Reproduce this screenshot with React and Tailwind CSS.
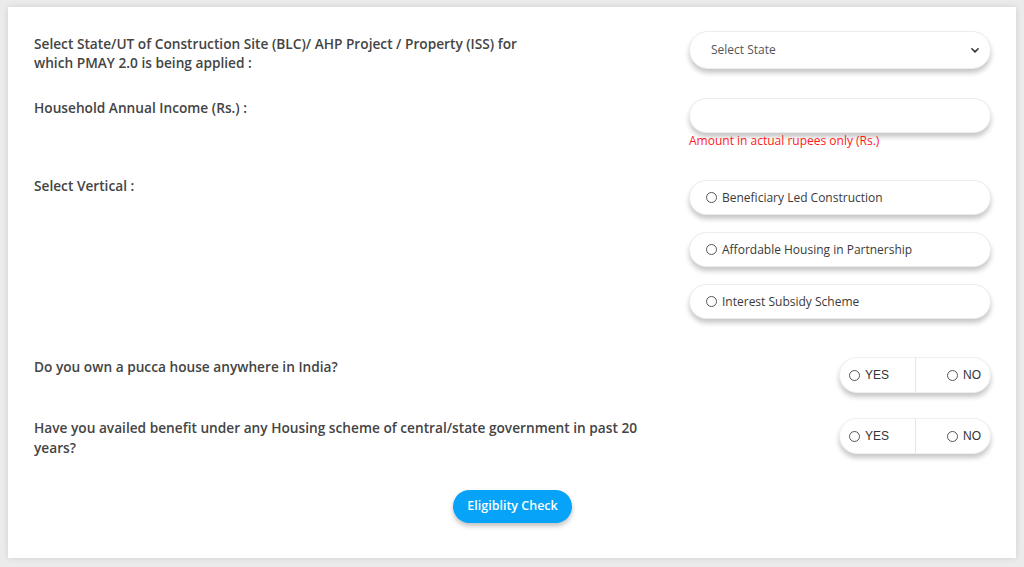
import React, { useState } from 'react';

const font = { fontFamily: '"Open Sans", "Liberation Sans", sans-serif' };

function Radio({ checked }) {
  return (
    <span className="inline-block w-[11px] h-[11px] rounded-full border border-[#555] bg-white shrink-0">
      {checked && <span className="block w-[5px] h-[5px] m-[2px] rounded-full bg-[#333]" />}
    </span>
  );
}

function Pill({ children, className = '' }) {
  return (
    <div className={`w-[302px] rounded-full bg-white border border-[#ececec] shadow-[0_4px_5px_rgba(0,0,0,0.22)] ${className}`}>
      {children}
    </div>
  );
}

function YesNo({ value, onChange }) {
  return (
    <div className="w-[152px] h-[36px] rounded-full bg-white border border-[#efefef] shadow-[0_4px_5px_rgba(0,0,0,0.22)] flex text-[12px] text-[#333]" style={{ fontFamily: '"Liberation Sans", Arial, sans-serif' }}>
      <button onClick={() => onChange('yes')} className="flex-1 flex items-center gap-[5px] pl-[9px] border-r border-[#e6e6e6]">
        <Radio checked={value === 'yes'} />
        <span>YES</span>
      </button>
      <button onClick={() => onChange('no')} className="flex-1 flex items-center justify-end gap-[5px] pr-[9px]">
        <Radio checked={value === 'no'} />
        <span>NO</span>
      </button>
    </div>
  );
}

export default function App() {
  const [vertical, setVertical] = useState(null);
  const [pucca, setPucca] = useState(null);
  const [availed, setAvailed] = useState(null);

  const verticals = [
    'Beneficiary Led Construction',
    'Affordable Housing in Partnership',
    'Interest Subsidy Scheme',
  ];

  return (
    <div className="w-full h-[567px] bg-[#ebebeb] pt-[7px] px-[8px]" style={font}>
      <div className="bg-white h-[551px] shadow-[0_0_6px_rgba(0,0,0,0.12)] pl-[26px] pr-[25px] pt-[24px]">
        {/* State */}
        <div className="flex justify-between">
          <p className="w-[520px] text-[13.7px] font-semibold leading-[19px] text-[#444] pt-[3px]">
            Select State/UT of Construction Site (BLC)/ AHP Project / Property (ISS) for which PMAY 2.0 is being applied :
          </p>
          <Pill className="h-[38px] relative">
            <div className="h-full flex items-center pl-[21px] pr-[10px] justify-between">
              <span className="text-[12px] text-[#555]">Select State</span>
              <svg width="10" height="10" viewBox="0 0 16 16" fill="none" stroke="#333" strokeWidth="2.5" strokeLinecap="round" strokeLinejoin="round">
                <path d="M3 6l5 5 5-5" />
              </svg>
            </div>
          </Pill>
        </div>

        {/* Income */}
        <div className="flex justify-between mt-[26px]">
          <p className="text-[13.7px] font-semibold leading-[19px] text-[#444]">
            Household Annual Income (Rs.) :
          </p>
          <div className="w-[302px]">
            <Pill className="h-[35px]">
              <input className="w-full h-full rounded-full px-[20px] text-[12px] outline-none bg-transparent" />
            </Pill>
            <p className="text-[12px] text-[#ff1a1a] leading-[16px]">Amount in actual rupees only (Rs.)</p>
          </div>
        </div>

        {/* Vertical */}
        <div className="flex justify-between mt-[27px]">
          <p className="text-[13.7px] font-semibold leading-[19px] text-[#444]">Select Vertical :</p>
          <div className="w-[302px] flex flex-col gap-[17px] mt-[4px]">
            {verticals.map((v) => (
              <Pill key={v} className="h-[35px]">
                <button onClick={() => setVertical(v)} className="w-full h-full flex items-center gap-[5px] pl-[16px] text-[12px] text-[#3a3a3a]">
                  <Radio checked={vertical === v} />
                  <span>{v}</span>
                </button>
              </Pill>
            ))}
          </div>
        </div>

        {/* Pucca */}
        <div className="flex justify-between items-start mt-[38px]">
          <p className="text-[13.7px] font-semibold leading-[19px] text-[#444]">
            Do you own a pucca house anywhere in India?
          </p>
          <YesNo value={pucca} onChange={setPucca} />
        </div>

        {/* Availed */}
        <div className="flex justify-between items-start mt-[25px]">
          <p className="w-[625px] text-[13.7px] font-semibold leading-[20px] text-[#444]">
            Have you availed benefit under any Housing scheme of central/state government in past 20 years?
          </p>
          <YesNo value={availed} onChange={setAvailed} />
        </div>

        <div className="flex justify-center mt-[32px]">
          <button className="h-[33px] px-[14px] rounded-full bg-[#06a3f8] text-white text-[12.5px] font-semibold shadow-[0_3px_5px_rgba(0,0,0,0.25)]">
            Eligiblity Check
          </button>
        </div>
      </div>
    </div>
  );
}
